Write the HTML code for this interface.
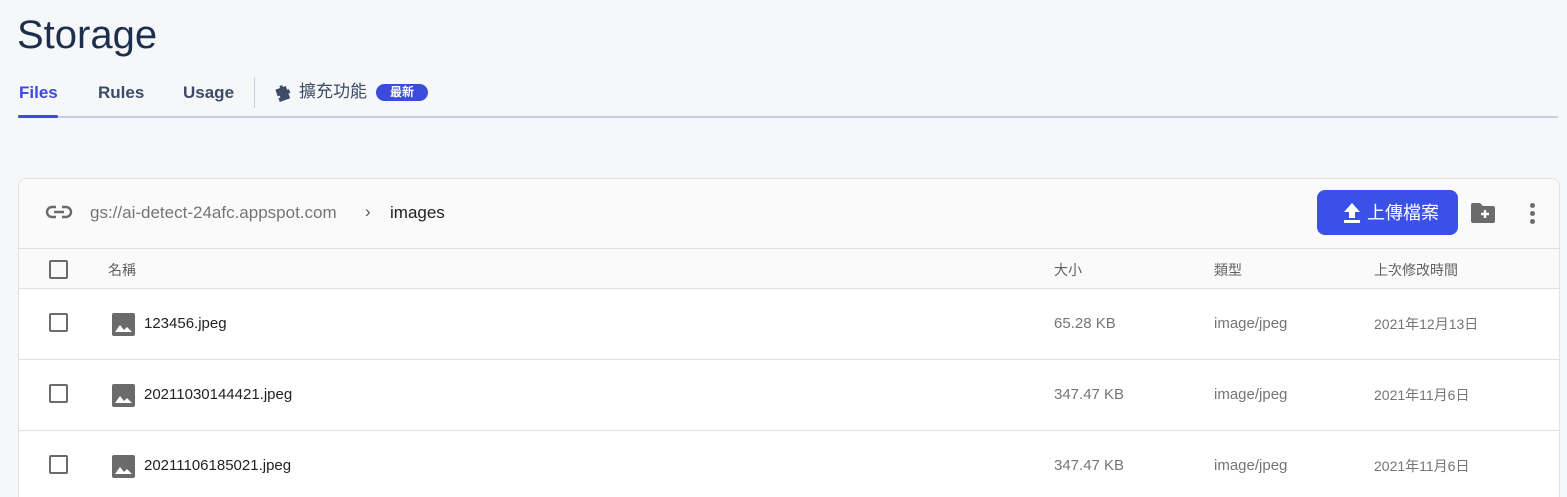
<!DOCTYPE html><html><head><meta charset="utf-8"><style>
html,body{margin:0;width:1567px;height:497px;overflow:hidden}
body{background:#f6f7f9;font-family:"Liberation Sans","Noto Sans CJK TC",sans-serif;position:relative}
.a{position:absolute;white-space:nowrap;line-height:20px}
.cb{position:absolute;left:30px;width:15px;height:15px;border:2px solid #6b6b6b;border-radius:2px}
.row{position:absolute;left:0;right:0;height:71px;border-top:1px solid #e0e0e0;background:#fff}
.row .t{position:absolute;top:25px;font-size:15px;line-height:20px;height:20px;color:#757575;white-space:nowrap}
</style></head><body>
<div class="a" style="left:17px;top:12px;font-size:40px;line-height:46px;color:#1e2f4d">Storage</div>
<div class="a" style="left:19px;top:83px;font-size:17px;color:#3b4bdb;font-weight:bold">Files</div>
<div class="a" style="left:98px;top:83px;font-size:17px;color:#3d4b66;font-weight:bold">Rules</div>
<div class="a" style="left:183px;top:83px;font-size:17px;color:#3d4b66;font-weight:bold">Usage</div>
<div class="a" style="left:254px;top:78px;width:1px;height:30px;background:#c4ccd9"></div>
<svg class="a" style="left:274px;top:83px" width="20" height="20" viewBox="0 0 20 20"><path d="M3 4h5V2h3v2h3v4h2v4h-2v5H3v-4h2v-2H3z" fill="#3d4b66" transform="rotate(-20 10 10)"/></svg>
<div class="a" style="left:299px;top:82px;font-size:17px;color:#3d4b66;height:20px">擴充功能</div>
<div class="a" style="left:376px;top:84px;width:52px;height:17px;border-radius:9px;background:#3b4bdb;color:#fff;font-size:12px;font-weight:bold;text-align:center;line-height:17px">最新</div>
<div class="a" style="left:18px;top:116px;width:1540px;height:2px;background:#c4cfe0"></div>
<div class="a" style="left:18px;top:115px;width:40px;height:3px;background:#3b4bdb;border-radius:2px"></div>

<div class="a" style="left:18px;top:178px;width:1540px;height:340px;background:#fafafa;border:1px solid #e2e2e2;border-radius:8px;overflow:hidden">
<svg class="a" style="left:26px;top:25px" width="28" height="16" viewBox="0 0 28 16"><path d="M11 3H7a5 5 0 0 0 0 10h4M17 3h4a5 5 0 0 1 0 10h-4M9 8h10" stroke="#6b6b6b" stroke-width="2.4" fill="none"/></svg>
<div class="a" style="left:71px;top:24px;font-size:17px;color:#757575">gs://ai-detect-24afc.appspot.com</div>
<div class="a" style="left:346px;top:23px;font-size:17px;color:#555">›</div>
<div class="a" style="left:371px;top:24px;font-size:17px;color:#222">images</div>
<div class="a" style="left:1298px;top:11px;width:141px;height:45px;border-radius:8px;background:#3b50e8;color:#fff;font-size:18px;line-height:45px"><svg style="position:absolute;left:25px;top:12px" width="20" height="22" viewBox="0 0 20 22"><path d="M10 1L2 10h5v6h6v-6h5z M2 18h16v3H2z" fill="#fff"/></svg><span style="position:absolute;left:50px;top:12px;line-height:22px;height:22px">上傳檔案</span></div>
<svg class="a" style="left:1451px;top:23px" width="26" height="22" viewBox="0 0 26 22"><path d="M1 3a2 2 0 0 1 2-2h7l3 3h10a2 2 0 0 1 2 2v13a2 2 0 0 1-2 2H3a2 2 0 0 1-2-2z" fill="#6b6b6b"/><path d="M15 8v8M11 12h8" stroke="#fff" stroke-width="2.4"/></svg>
<div class="a" style="left:1511px;top:24px;width:5px;height:5px;border-radius:3px;background:#6b6b6b;box-shadow:0 8px 0 #6b6b6b,0 16px 0 #6b6b6b"></div>
<div class="a" style="left:0;right:0;top:69px;height:1px;background:#e0e0e0"></div>
<div class="cb" style="top:81px"></div>
<div class="a" style="left:89px;top:81px;font-size:14px;color:#616161;height:20px">名稱</div>
<div class="a" style="left:1035px;top:81px;font-size:14px;color:#616161;height:20px">大小</div>
<div class="a" style="left:1195px;top:81px;font-size:14px;color:#616161;height:20px">類型</div>
<div class="a" style="left:1355px;top:81px;font-size:14px;color:#616161;height:20px">上次修改時間</div>
<div class="row" style="top:109px"><div class="cb" style="top:24px"></div><svg class="a" style="left:93px;top:24px" width="23" height="23" viewBox="0 0 23 23"><rect width="23" height="23" rx="2" fill="#6b6b6b"/><path d="M3 19l5-7 4 5 3-3 5 5z" fill="#fff"/></svg><div class="t" style="left:125px;color:#222">123456.jpeg</div><div class="t" style="left:1035px">65.28 KB</div><div class="t" style="left:1195px">image/jpeg</div><div class="t" style="left:1355px;font-size:14px">2021年12月13日</div></div>
<div class="row" style="top:180px"><div class="cb" style="top:24px"></div><svg class="a" style="left:93px;top:24px" width="23" height="23" viewBox="0 0 23 23"><rect width="23" height="23" rx="2" fill="#6b6b6b"/><path d="M3 19l5-7 4 5 3-3 5 5z" fill="#fff"/></svg><div class="t" style="left:125px;color:#222">20211030144421.jpeg</div><div class="t" style="left:1035px">347.47 KB</div><div class="t" style="left:1195px">image/jpeg</div><div class="t" style="left:1355px;font-size:14px">2021年11月6日</div></div>
<div class="row" style="top:251px"><div class="cb" style="top:24px"></div><svg class="a" style="left:93px;top:24px" width="23" height="23" viewBox="0 0 23 23"><rect width="23" height="23" rx="2" fill="#6b6b6b"/><path d="M3 19l5-7 4 5 3-3 5 5z" fill="#fff"/></svg><div class="t" style="left:125px;color:#222">20211106185021.jpeg</div><div class="t" style="left:1035px">347.47 KB</div><div class="t" style="left:1195px">image/jpeg</div><div class="t" style="left:1355px;font-size:14px">2021年11月6日</div></div>
</div>
</body></html>
